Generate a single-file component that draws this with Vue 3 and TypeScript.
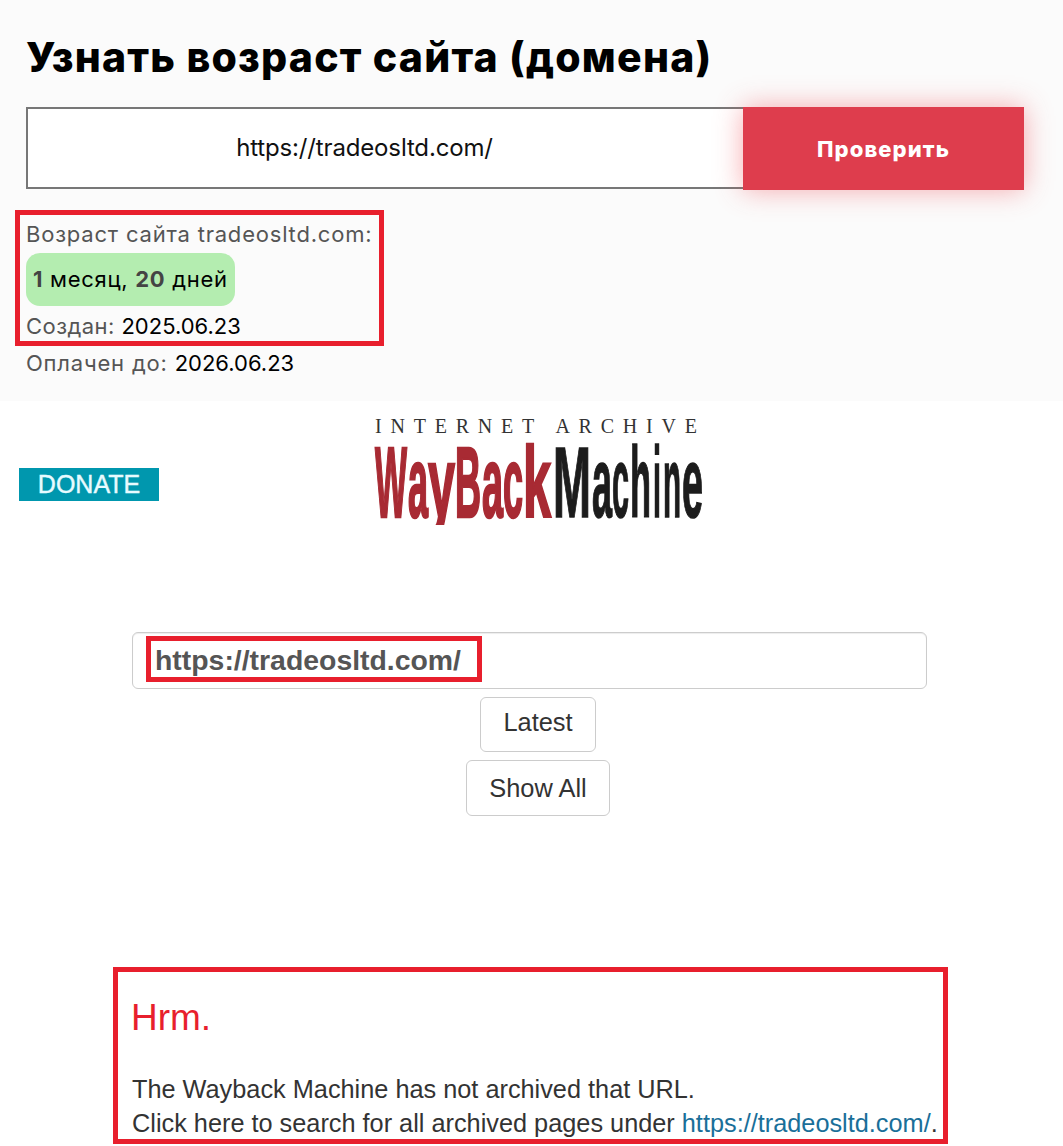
<script setup lang="ts">
type LogoLetter = { ch: string; x: number; w: number; adv: number; tone: 'red' | 'black' };

// adv = advance width of the glyph in the bold face, used to squeeze it to w
const logoLetters: LogoLetter[] = [
  { ch: 'W', x: 1, w: 32, adv: 94.4, tone: 'red' },
  { ch: 'a', x: 34, w: 20, adv: 55.6, tone: 'red' },
  { ch: 'y', x: 54, w: 27, adv: 55.6, tone: 'red' },
  { ch: 'B', x: 81, w: 26, adv: 72.2, tone: 'red' },
  { ch: 'a', x: 108, w: 21, adv: 55.6, tone: 'red' },
  { ch: 'c', x: 129, w: 20, adv: 55.6, tone: 'red' },
  { ch: 'k', x: 149, w: 28, adv: 55.6, tone: 'red' },
  { ch: 'M', x: 179, w: 38, adv: 83.3, tone: 'black' },
  { ch: 'a', x: 218, w: 20, adv: 55.6, tone: 'black' },
  { ch: 'c', x: 238, w: 17, adv: 55.6, tone: 'black' },
  { ch: 'h', x: 256, w: 21, adv: 61.1, tone: 'black' },
  { ch: 'i', x: 279, w: 8, adv: 27.8, tone: 'black' },
  { ch: 'n', x: 289, w: 18, adv: 61.1, tone: 'black' },
  { ch: 'e', x: 308, w: 21, adv: 55.6, tone: 'black' },
];

function letterTransform(l: LogoLetter) {
  return `translate(${l.x} 99) scale(${(l.w / l.adv).toFixed(3)} 1)`;
}
</script>

<template>
  <div class="page">
    <section class="checker">
      <h1 class="checker__title">Узнать возраст сайта (домена)</h1>
      <div class="checker__form">
        <div class="checker__input">https://tradeosltd.com/</div>
        <button type="button" class="checker__button">Проверить</button>
      </div>
      <div class="checker__marked">
        <div class="checker__line">Возраст сайта tradeosltd.com:</div>
        <div class="checker__age"><b>1</b> месяц, <b>20</b> дней</div>
        <div class="checker__line checker__line--created">Создан: <span class="checker__date">2025.06.23</span></div>
      </div>
      <div class="checker__line checker__line--paid">Оплачен до: <span class="checker__date">2026.06.23</span></div>
    </section>

    <section class="wayback">
      <div class="wayback__head">
        <div class="wayback__donate">DONATE</div>
        <svg class="wayback__logo" width="330" height="108" viewBox="0 0 330 108" role="img" aria-label="Internet Archive Wayback Machine">
          <text class="wayback__archive" x="1" y="15" textLength="322" lengthAdjust="spacing">INTERNET ARCHIVE</text>
          <text
            v-for="(l, i) in logoLetters"
            :key="i"
            class="wayback__letter"
            :class="`wayback__letter--${l.tone}`"
            :transform="letterTransform(l)"
            vector-effect="non-scaling-stroke"
          >{{ l.ch }}</text>
          <!-- the logo's y has a short tail -->
          <rect x="50" y="107" width="36" height="18" fill="#fff" />
        </svg>
      </div>

      <div class="wayback__search">
        <span class="wayback__url">https://tradeosltd.com/</span>
      </div>
      <div class="wayback__buttons">
        <button type="button" class="wayback__btn wayback__btn--latest">Latest</button>
        <button type="button" class="wayback__btn wayback__btn--all">Show All</button>
      </div>

      <div class="wayback__notice">
        <h2 class="wayback__hrm">Hrm.</h2>
        <p class="wayback__msg">
          The Wayback Machine has not archived that URL.<br />
          Click here to search for all archived pages under <a class="wayback__link">https://tradeosltd.com/</a>.
        </p>
      </div>
    </section>
  </div>
</template>

<style>
html,
body {
  margin: 0;
  background: #fff;
}
</style>

<style scoped>
.page {
  width: 1063px;
  height: 1146px;
  overflow: hidden;
  background: #fff;
}

.checker {
  box-sizing: border-box;
  height: 401px;
  padding: 30px 39px 0 26px;
  background: #fbfbfb;
  font-family: Inter, 'Noto Sans', sans-serif;
  color: #555;
}

.checker__title {
  margin: 0;
  font-size: 41px;
  line-height: 54px;
  font-weight: 800;
  letter-spacing: 1.22px;
  color: #000;
  white-space: nowrap;
}

.checker__form {
  display: flex;
  margin-top: 23px;
  height: 83px;
}

.checker__input {
  box-sizing: border-box;
  width: 717px;
  height: 82px;
  padding: 0 42px 0 0;
  border: 2px solid #777;
  border-right: 0;
  background: #fff;
  color: #111;
  font-size: 24px;
  letter-spacing: -0.15px;
  line-height: 78px;
  text-align: center;
}

.checker__button {
  width: 281px;
  height: 83px;
  border: 0;
  background: #de3d4d;
  color: #fff;
  font-family: inherit;
  font-size: 22px;
  font-weight: 800;
  letter-spacing: 1.1px;
  box-shadow: 0 0 26px rgba(240, 70, 80, 0.45);
}

.checker__marked {
  width: 369px;
  height: 136px;
  box-sizing: border-box;
  margin: 20px 0 0 -11px;
  padding: 0 0 0 6px;
  border: 5px solid #e81f2d;
}

.checker__line {
  font-size: 22px;
  letter-spacing: 0.8px;
  line-height: 38px;
  white-space: nowrap;
}

.checker__line--created {
  letter-spacing: 0.45px;
  line-height: 40px;
}

.checker__line--paid {
  margin-top: -2px;
}

.checker__date {
  color: #000;
  letter-spacing: 0;
}

.checker__age {
  width: 209px;
  height: 53px;
  box-sizing: border-box;
  padding-left: 7px;
  border-radius: 14px;
  background: #b4edb0;
  color: #000;
  font-size: 22px;
  letter-spacing: 0.7px;
  line-height: 53px;
  white-space: nowrap;
}

.checker__age b {
  color: #444;
  font-weight: 700;
}

.wayback {
  font-family: 'Liberation Sans', Arial, sans-serif;
  color: #333;
}

.wayback__head {
  display: flex;
  align-items: flex-start;
  padding: 17px 0 0 19px;
}

.wayback__donate {
  width: 140px;
  height: 33px;
  margin-top: 50px;
  background: #0097ae;
  color: #e8fbff;
  font-size: 25px;
  line-height: 32px;
  text-align: center;
  -webkit-text-stroke: 0.4px #e8fbff;
}

.wayback__logo {
  margin-left: 215px;
  overflow: visible;
}

.wayback__archive {
  font-family: 'Liberation Serif', serif;
  font-size: 20px;
  fill: #333;
}

.wayback__letter {
  font-family: 'Liberation Sans', sans-serif;
  font-size: 100px;
  font-weight: 700;
}

.wayback__letter--red {
  fill: #a82a33;
  stroke: #a82a33;
  stroke-width: 2px;
}

.wayback__letter--black {
  fill: #1c1c1c;
  stroke: #1c1c1c;
  stroke-width: 1.2px;
}

.wayback__search {
  box-sizing: border-box;
  width: 795px;
  height: 57px;
  margin: 106px 0 0 132px;
  padding-top: 3px;
  border: 1px solid #ccc;
  border-radius: 6px;
  box-shadow: inset 0 1px 1px rgba(0, 0, 0, 0.075);
}

.wayback__url {
  display: block;
  box-sizing: border-box;
  width: 336px;
  height: 46px;
  margin-left: 13px;
  padding-left: 4px;
  border: 5px solid #e81f2d;
  color: #555;
  font-size: 28.4px;
  font-weight: 700;
  line-height: 38px;
  white-space: nowrap;
}

.wayback__buttons {
  display: flex;
  flex-direction: column;
  align-items: center;
  gap: 8px;
  width: 812px;
  margin: 8px 0 0 132px;
}

.wayback__btn {
  height: 55px;
  box-sizing: border-box;
  border: 1px solid #ccc;
  border-radius: 6px;
  background: #fff;
  color: #333;
  font-family: inherit;
  font-size: 25.4px;
}

.wayback__btn--latest {
  width: 116px;
  padding-bottom: 5px;
}

.wayback__btn--all {
  width: 144px;
  height: 56px;
}

.wayback__notice {
  box-sizing: border-box;
  width: 835px;
  height: 177px;
  margin: 151px 0 0 113px;
  padding: 0 0 0 14px;
  border: 5px solid #e81f2d;
}

.wayback__hrm {
  margin: 24px 0 0 -1px;
  color: #e81f2d;
  font-size: 37px;
  font-weight: 400;
  line-height: 44px;
}

.wayback__msg {
  margin: 32px 0 0;
  font-size: 25.3px;
  line-height: 34px;
  white-space: nowrap;
}

.wayback__link {
  color: #1a6f99;
}
</style>
